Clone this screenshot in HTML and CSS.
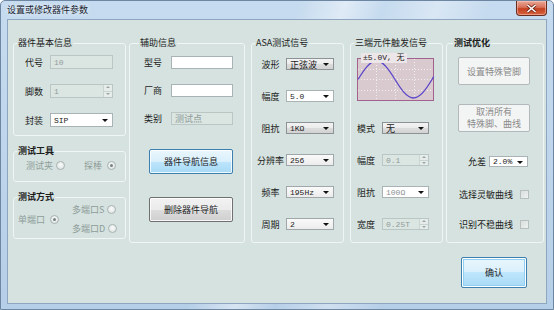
FILE: index.html
```html
<!DOCTYPE html>
<html lang="zh-CN">

<head>
    <meta charset="UTF-8" />
    <title>设置或修改器件参数</title>
    <link rel="stylesheet" href="styles.css">
</head>

<body>
    <div class="window">
        <div class="titlebar">
            <span class="title">设置或修改器件参数</span>
            <div class="close-btn">
                <svg width="11" height="9" viewBox="0 0 11 9">
                    <path d="M1.5 1 L9.5 8 M9.5 1 L1.5 8" stroke="#6a2216" stroke-width="3" />
                    <path d="M1.5 1 L9.5 8 M9.5 1 L1.5 8" stroke="#ffffff" stroke-width="1.6" />
                </svg>
            </div>
        </div>

        <div class="client">
            <div class="groups">
                <div class="col-stack">
                    <fieldset class="group group-basic">
                        <legend>器件基本信息</legend>
                        <div class="row">
                            <span class="lbl">代号</span>
                            <div class="field is-disabled w-basic">10</div>
                        </div>
                        <div class="row">
                            <span class="lbl">脚数</span>
                            <div class="field spin is-disabled w-basic">
                                <span class="val">1</span>
                                <span class="spin-btns"><i class="up"></i><i class="down"></i></span>
                            </div>
                        </div>
                        <div class="row">
                            <span class="lbl">封装</span>
                            <div class="combo w-basic">SIP</div>
                        </div>
                    </fieldset>

                    <fieldset class="group group-tool">
                        <legend class="bold">测试工具</legend>
                        <div class="row">
                            <span class="opt">测试夹<span class="radio"></span></span>
                            <span class="opt opt-probe">探棒<span class="radio is-checked"></span></span>
                        </div>
                    </fieldset>

                    <fieldset class="group group-mode">
                        <legend class="bold">测试方式</legend>
                        <div class="mode-body">
                            <span class="opt opt-single">单端口<span class="radio is-checked"></span></span>
                            <div class="mode-multi">
                                <span class="opt">多端口S<span class="radio"></span></span>
                                <span class="opt">多端口D<span class="radio"></span></span>
                            </div>
                        </div>
                    </fieldset>
                </div>

                <fieldset class="group group-aux">
                    <legend>辅助信息</legend>
                    <div class="row">
                        <span class="lbl">型号</span>
                        <div class="field w-aux"></div>
                    </div>
                    <div class="row">
                        <span class="lbl">厂商</span>
                        <div class="field w-aux"></div>
                    </div>
                    <div class="row">
                        <span class="lbl">类别</span>
                        <div class="field is-disabled w-aux cjk">测试点</div>
                    </div>
                    <button class="btn btn-hot btn-aux">器件导航信息</button>
                    <button class="btn btn-aux btn-aux-del">删除器件导航</button>
                </fieldset>

                <fieldset class="group group-asa">
                    <legend>ASA测试信号</legend>
                    <div class="row">
                        <span class="lbl">波形</span>
                        <div class="combo is-button cjk">正弦波</div>
                    </div>
                    <div class="row">
                        <span class="lbl">幅度</span>
                        <div class="combo">5.0</div>
                    </div>
                    <div class="row">
                        <span class="lbl">阻抗</span>
                        <div class="combo is-button">1KΩ</div>
                    </div>
                    <div class="row">
                        <span class="lbl">分辨率</span>
                        <div class="combo is-light">256</div>
                    </div>
                    <div class="row">
                        <span class="lbl">频率</span>
                        <div class="combo is-light">195Hz</div>
                    </div>
                    <div class="row">
                        <span class="lbl">周期</span>
                        <div class="combo is-light">2</div>
                    </div>
                </fieldset>

                <fieldset class="group group-tri">
                    <legend>三端元件触发信号</legend>
                    <div class="scope">
                        <svg width="77" height="43" viewBox="0 0 77 43">
                            <rect x="0.5" y="0.5" width="76" height="42" fill="#d8cace" stroke="#a3628d" />
                            <g stroke="#f3eef0" stroke-width="1" stroke-dasharray="1 2">
                                <line x1="19.5" y1="1" x2="19.5" y2="42" />
                                <line x1="38.5" y1="1" x2="38.5" y2="42" />
                                <line x1="57.5" y1="1" x2="57.5" y2="42" />
                                <line x1="1" y1="11.5" x2="76" y2="11.5" />
                                <line x1="1" y1="21.5" x2="76" y2="21.5" />
                                <line x1="1" y1="32.5" x2="76" y2="32.5" />
                            </g>
                            <path d="M1 21.5 C7 11.8 12.8 3 19.5 3 C26.2 3 32 11.8 38 21.5 C44 31.2 49.8 40 56.5 40 C63.2 40 69 31.2 75 21.5 C76 20 76.5 19 76.5 18.5"
                                fill="none" stroke="#5b45c9" stroke-width="1.3" />
                        </svg>
                        <span class="scope-tag">±5.0V, 无</span>
                    </div>
                    <div class="row row-mode">
                        <span class="lbl">模式</span>
                        <div class="combo is-button cjk">无</div>
                    </div>
                    <div class="row">
                        <span class="lbl">幅度</span>
                        <div class="field spin is-disabled w-tri">
                            <span class="val">0.1</span>
                            <span class="spin-btns"><i class="up"></i><i class="down"></i></span>
                        </div>
                    </div>
                    <div class="row">
                        <span class="lbl">阻抗</span>
                        <div class="combo is-muted w-tri">100Ω</div>
                    </div>
                    <div class="row">
                        <span class="lbl">宽度</span>
                        <div class="field spin is-disabled w-tri">
                            <span class="val">0.25T</span>
                            <span class="spin-btns"><i class="up"></i><i class="down"></i></span>
                        </div>
                    </div>
                </fieldset>

                <fieldset class="group group-opt">
                    <legend class="bold">测试优化</legend>
                    <button class="btn btn-off" disabled>设置特殊管脚</button>
                    <button class="btn btn-off btn-off-two" disabled>取消所有<br>特殊脚、曲线</button>
                    <div class="row row-tol">
                        <span class="lbl">允差</span>
                        <div class="combo">2.0%</div>
                    </div>
                    <div class="row row-check">
                        <span>选择灵敏曲线</span>
                        <span class="check"></span>
                    </div>
                    <div class="row row-check">
                        <span>识别不稳曲线</span>
                        <span class="check"></span>
                    </div>
                </fieldset>
            </div>

            <div class="footer">
                <button class="btn btn-hot btn-ok">确认</button>
            </div>
        </div>
    </div>
</body>

</html>
```

FILE: styles.css
```css
:root {
    --client-bg: #d5e2df;
    --group-line: #f0f6f4;
    --text-color: #1c1c1c;
    --text-muted: #8e9c99;
    --field-border: #a9b3b5;
    --frame-color: #bcd3ea;
}

* {
    box-sizing: border-box;
    margin: 0;
    padding: 0;
}

body {
    font-family: "Noto Sans CJK SC", sans-serif;
    font-size: 9px;
    color: var(--text-color);
    background-color: #ffffff;
}

.window {
    width: 554px;
    height: 310px;
    padding: 0 6px 7px 6px;
    background:
        linear-gradient(110deg, rgba(255, 255, 255, 0) 45%, rgba(255, 255, 255, 0.45) 52%, rgba(255, 255, 255, 0) 58%, rgba(255, 255, 255, 0.35) 66%, rgba(255, 255, 255, 0) 74%),
        linear-gradient(#c6dbef, #b6cfe8);
    border: 1px solid #6d87a3;
    border-radius: 5px 5px 0 0;
}

.titlebar {
    display: flex;
    align-items: flex-start;
    height: 18px;
}

.title {
    margin-top: 3px;
    font-size: 9px;
    line-height: 12px;
    color: #1a2430;
    text-shadow: 0 0 4px rgba(255, 255, 255, 0.9);
}

.close-btn {
    display: flex;
    align-items: center;
    justify-content: center;
    margin-left: auto;
    width: 31px;
    height: 15px;
    background: linear-gradient(#e9a796 0%, #d9715a 45%, #c4401f 55%, #d6643f 100%);
    border: 1px solid #6b2c20;
    border-top: none;
    border-radius: 0 0 4px 4px;
    box-shadow: inset 0 0 0 1px rgba(255, 210, 200, 0.5);
}

.client {
    height: 285px;
    padding: 17px 0 0 5px;
    background-color: var(--client-bg);
    border: 1px solid #8ea6bf;
}

.groups {
    display: flex;
    align-items: stretch;
    height: 206px;
}

.col-stack {
    display: flex;
    flex-direction: column;
    width: 113px;
}

.group {
    border: 1px solid var(--group-line);
    border-radius: 3px;
    min-width: 0;
}

/* legend sits after the fieldset padding, so pull it back */
.group legend {
    padding: 0 1px;
    line-height: 12px;
}

.group legend.bold {
    font-weight: bold;
}

.row {
    display: flex;
    align-items: center;
    height: 13px;
}

.lbl {
    flex: none;
    white-space: nowrap;
}

/* 器件基本信息 */
.group-basic {
    padding: 6px 0 8px 11px;
}

.group-basic legend {
    margin-left: -8px;
}

.group-basic .row {
    height: 14px;
}

.group-basic .row + .row {
    margin-top: 15px;
}

.group-basic .lbl {
    width: 25px;
}

.w-basic {
    width: 63px;
}

/* 测试工具 */
.group-tool {
    margin-top: 9px;
    padding: 3px 0 10px 12px;
}

.group-tool legend {
    margin-left: -9px;
}

.group-tool .row {
    height: 11px;
}

.opt {
    display: flex;
    align-items: center;
    gap: 3px;
    color: var(--text-muted);
    white-space: nowrap;
}

.opt-probe {
    margin-left: 19px;
    gap: 5px;
}

/* 测试方式 */
.group-mode {
    margin-top: 9px;
    padding: 1px 0 4px 4px;
}

.group-mode legend {
    margin-left: -1px;
}

.mode-body {
    display: flex;
    align-items: center;
}

.opt-single {
    gap: 5px;
}

.mode-multi {
    display: flex;
    flex-direction: column;
    gap: 8px;
    margin-left: 13px;
}

.mode-multi .opt {
    height: 11px;
}

.radio {
    position: relative;
    flex: none;
    width: 9px;
    height: 9px;
    border: 1px solid #a9b3b1;
    border-radius: 50%;
    background: radial-gradient(circle at 50% 40%, #fafbfb, #d9dfde);
}

.radio.is-checked::after {
    content: "";
    position: absolute;
    left: 2px;
    top: 2px;
    width: 3px;
    height: 3px;
    border-radius: 50%;
    background-color: #75827f;
}

/* 辅助信息 */
.group-aux {
    width: 116px;
    margin-left: 3px;
    padding: 7px 0 0 14px;
}

.group-aux legend {
    margin-left: -5px;
}

.group-aux .row + .row {
    margin-top: 15px;
}

.group-aux .lbl {
    width: 27px;
}

.w-aux {
    width: 62px;
}

.btn-aux {
    display: block;
    width: 84px;
    height: 25px;
    margin-top: 24px;
    margin-left: 5px;
}

.btn-aux-del {
    margin-top: 23px;
}

/* ASA测试信号 */
.group-asa {
    width: 93px;
    margin-left: 6px;
    padding: 9px 0 0 3px;
}

.group-asa legend {
    margin-left: 0;
}

.group-asa .row {
    height: 12px;
}

.group-asa .row + .row {
    margin-top: 20px;
}

.group-asa .lbl {
    width: 31px;
    text-align: center;
}

.group-asa .combo {
    width: 48px;
}

/* 三端元件触发信号 */
.group-tri {
    width: 93px;
    margin-left: 6px;
    padding: 9px 0 0 6px;
}

.group-tri legend {
    margin-left: -3px;
}

.scope {
    position: relative;
    width: 77px;
    height: 43px;
}

.scope svg {
    display: block;
}

.scope-tag {
    position: absolute;
    left: 4px;
    top: -5px;
    padding: 0 2px;
    font-family: "Liberation Mono", "Noto Sans CJK SC", monospace;
    font-size: 8px;
    line-height: 10px;
    background-color: #ece6e8;
    white-space: nowrap;
}

.group-tri .row {
    height: 12px;
}

.group-tri .row + .row {
    margin-top: 20px;
}

.group-tri .row-mode {
    margin-top: 21px;
}

.group-tri .lbl {
    width: 25px;
}

.group-tri .combo {
    width: 47px;
}

.w-tri {
    width: 47px;
}

/* 测试优化 */
.group-opt {
    width: 98px;
    margin-left: 3px;
    padding: 8px 0 0 11px;
}

.group-opt legend {
    margin-left: -5px;
}

.btn-off {
    display: block;
    width: 72px;
    height: 28px;
}

.btn-off-two {
    margin-top: 19px;
    line-height: 12px;
}

.row-tol {
    height: 11px;
    margin-top: 24px;
    margin-left: 10px;
}

.row-tol .lbl {
    width: 21px;
}

.row-tol .combo {
    width: 39px;
}

.row-check {
    height: 12px;
    margin-top: 21px;
    margin-left: 1px;
    gap: 7px;
}

.row-check + .row-check {
    margin-top: 18px;
}

.check {
    flex: none;
    width: 9px;
    height: 9px;
    border: 1px solid #b6bfbd;
    background: linear-gradient(135deg, #d9dfde, #eef1f0);
}

/* fields */
.field {
    display: flex;
    align-items: center;
    height: 100%;
    padding: 0 3px;
    border: 1px solid var(--field-border);
    background-color: #ffffff;
    font-family: "Liberation Mono", "Noto Sans CJK SC", monospace;
    font-size: 8px;
    white-space: nowrap;
}

.field.is-disabled {
    border-color: #bac6c3;
    background-color: #dbe5e2;
    color: var(--text-muted);
}

.cjk {
    font-family: "Noto Sans CJK SC", sans-serif;
    font-size: 9px;
}

.spin {
    padding-right: 0;
}

.spin .val {
    flex: 1;
}

.spin-btns {
    display: flex;
    flex-direction: column;
    width: 9px;
    height: 100%;
    border-left: 1px solid #c9d3d0;
}

.spin-btns i {
    position: relative;
    flex: 1;
    background-color: #e6ecea;
}

.spin-btns i + i {
    border-top: 1px solid #c9d3d0;
}

.spin-btns i::after {
    content: "";
    position: absolute;
    left: 2px;
    top: 1px;
    border-left: 2px solid transparent;
    border-right: 2px solid transparent;
}

.spin-btns .up::after {
    border-bottom: 2px solid #9aa6a3;
}

.spin-btns .down::after {
    border-top: 2px solid #9aa6a3;
}

.combo {
    position: relative;
    display: flex;
    align-items: center;
    height: 100%;
    padding: 0 12px 0 3px;
    border: 1px solid var(--field-border);
    background-color: #ffffff;
    font-family: "Liberation Mono", "Noto Sans CJK SC", monospace;
    font-size: 8px;
    white-space: nowrap;
}

.combo::after {
    content: "";
    position: absolute;
    right: 4px;
    top: 50%;
    margin-top: -1px;
    border-left: 3px solid transparent;
    border-right: 3px solid transparent;
    border-top: 3px solid #111111;
}

.combo.is-button {
    border-color: #8c9295;
    background: linear-gradient(#f3f3f3 0%, #ebebeb 50%, #dddddd 50%, #d2d2d2 100%);
}

.combo.is-light {
    border-color: #9fa7aa;
    background: linear-gradient(#fafafa, #ececec);
}

.combo.is-muted {
    color: #8a8f91;
}

.combo.cjk {
    font-size: 9px;
}

/* buttons */
.btn {
    font-family: "Noto Sans CJK SC", sans-serif;
    font-size: 9px;
    color: var(--text-color);
    border: 1px solid #707070;
    border-radius: 2px;
    background: linear-gradient(#f2f2f2 0%, #ebebeb 50%, #dddddd 50%, #cfcfcf 100%);
    box-shadow: inset 0 0 0 1px rgba(255, 255, 255, 0.8);
}

.btn-hot {
    border-color: #3c7fb1;
    background: linear-gradient(#eaf6fd 0%, #d9f0fc 50%, #bee6fd 50%, #a7d9f5 100%);
}

.btn-off {
    color: #8a8a8a;
    border-color: #b3b8ba;
    background: #f3f4f4;
    box-shadow: none;
}

.footer {
    display: flex;
    justify-content: flex-end;
    margin-top: 14px;
    padding-right: 19px;
}

.btn-ok {
    width: 66px;
    height: 31px;
    box-shadow: inset 0 0 0 1px #ffffff, inset 0 0 0 2px #8fd0f2;
}
```
